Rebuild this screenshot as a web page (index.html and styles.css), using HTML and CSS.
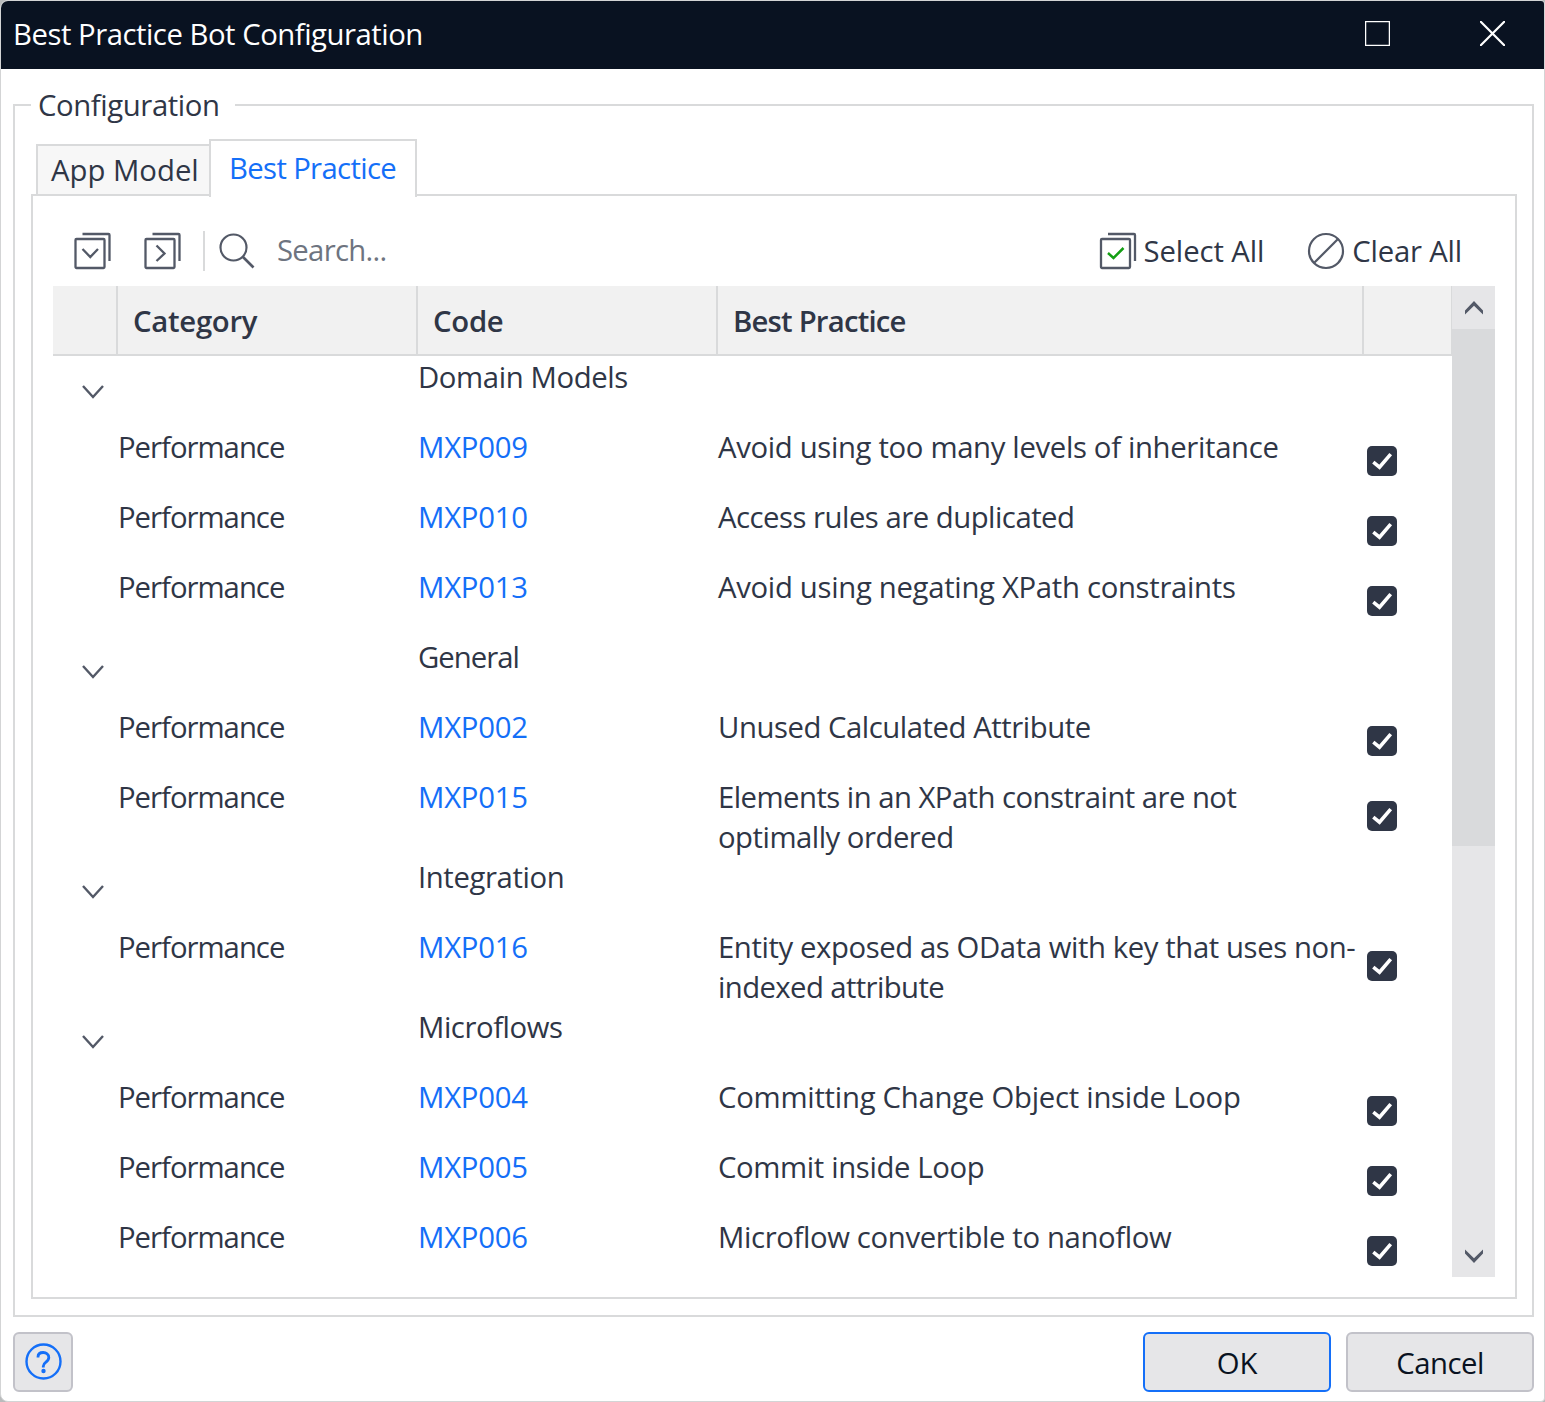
FILE: index.html
```html
<!DOCTYPE html>
<html lang="en">
<head>
<meta charset="utf-8">
<title>Best Practice Bot Configuration</title>
<link rel="stylesheet" href="styles.css">
</head>
<body>
<svg class="sprite" width="0" height="0">
  <symbol id="check" viewBox="0 0 30 30"><path d="M6.300 16.200l6.200 5L23.700 8.200" fill="none" stroke="#fff" stroke-width="3.600"/></symbol>
  <symbol id="chevron" viewBox="0 0 24 16"><path d="M2 2l10 11L22 2" fill="none" stroke="#535967" stroke-width="2.400"/></symbol>
</svg>
<div class="window">
  <header class="titlebar">
    <h1 class="title">Best Practice Bot Configuration</h1>
    <svg class="maximize" width="25" height="25" viewBox="0 0 25 25"><rect x=".6" y=".6" width="23.8" height="23.8" fill="none" stroke="#fff" stroke-width="1.3"/></svg>
    <svg class="close" width="25" height="25" viewBox="0 0 25 25"><path d="M0 0l25 25M25 0L0 25" stroke="#fff" stroke-width="2.2"/></svg>
  </header>

  <fieldset class="group">
    <legend class="legend">Configuration</legend>
    <div class="tabs">
      <div class="tab">App Model</div>
      <div class="tab tab-active">Best Practice</div>
    </div>
    <div class="panel">
      <div class="toolbar">
        <svg class="tool" width="38" height="38" viewBox="0 0 38 38" fill="none" stroke="#535967" stroke-width="2.3"><rect x="2.500" y="7" width="29" height="29" rx="1"/><path d="M9.500 2h26a1 1 0 0 1 1 1v26M9.500 17l7.800 8L25 17"/></svg>
        <svg class="tool" width="38" height="38" viewBox="0 0 38 38" fill="none" stroke="#535967" stroke-width="2.3"><rect x="2.500" y="7" width="29" height="29" rx="1"/><path d="M9.500 2h26a1 1 0 0 1 1 1v26M13.500 13.500l8 8L13.500 29"/></svg>
        <span class="divider"></span>
        <svg class="search-icon" width="36" height="36" viewBox="0 0 36 36" fill="none" stroke="#535967" stroke-width="2.2"><circle cx="14.500" cy="14.500" r="13"/><path d="M23.500 23.500L34.500 34.500" stroke-width="2.600"/></svg>
        <span class="search">Search...</span>
        <div class="action action-select">
          <svg width="38" height="38" viewBox="0 0 38 38" fill="none" stroke="#535967" stroke-width="2.3"><rect x="2" y="7" width="29" height="29" rx="1"/><path d="M9 2h26a1 1 0 0 1 1 1v26"/><path d="M9 21l5.500 5L24.500 16" stroke="#149f14" stroke-width="2.500"/></svg>
          <span class="label-select">Select All</span>
        </div>
        <div class="action">
          <svg width="38" height="38" viewBox="0 0 38 38" fill="none" stroke="#535967" stroke-width="2.2"><circle cx="19" cy="19" r="17"/><path d="M7 31L31 7"/></svg>
          <span class="label-clear">Clear All</span>
        </div>
      </div>

      <div class="grid">
        <div class="table">
          <div class="row head"><div></div><div class="h-cat">Category</div><div class="h-code">Code</div><div class="h-bp">Best Practice</div><div></div></div>
          <div class="row group-row"><svg class="chev"><use href="#chevron"/></svg><div></div><div class="g1">Domain Models</div></div>
          <div class="row"><i></i><div class="cat">Performance</div><a class="code">MXP009</a><div class="t1">Avoid using too many levels of inheritance</div><svg class="box"><use href="#check"/></svg></div>
          <div class="row"><i></i><div class="cat">Performance</div><a class="code">MXP010</a><div class="t2">Access rules are duplicated</div><svg class="box"><use href="#check"/></svg></div>
          <div class="row"><i></i><div class="cat">Performance</div><a class="code">MXP013</a><div class="t3">Avoid using negating XPath constraints</div><svg class="box"><use href="#check"/></svg></div>
          <div class="row group-row"><svg class="chev"><use href="#chevron"/></svg><div></div><div class="g2">General</div></div>
          <div class="row"><i></i><div class="cat">Performance</div><a class="code">MXP002</a><div class="t4">Unused Calculated Attribute</div><svg class="box"><use href="#check"/></svg></div>
          <div class="row"><i></i><div class="cat">Performance</div><a class="code">MXP015</a><div><span class="t5">Elements in an XPath constraint are not</span><br><span class="t6">optimally ordered</span></div><svg class="box"><use href="#check"/></svg></div>
          <div class="row group-row"><svg class="chev"><use href="#chevron"/></svg><div></div><div class="g3">Integration</div></div>
          <div class="row"><i></i><div class="cat">Performance</div><a class="code">MXP016</a><div><span class="t7">Entity exposed as OData with key that uses non-</span><br><span class="t8">indexed attribute</span></div><svg class="box"><use href="#check"/></svg></div>
          <div class="row group-row"><svg class="chev"><use href="#chevron"/></svg><div></div><div class="g4">Microflows</div></div>
          <div class="row"><i></i><div class="cat">Performance</div><a class="code">MXP004</a><div class="t9">Committing Change Object inside Loop</div><svg class="box"><use href="#check"/></svg></div>
          <div class="row"><i></i><div class="cat">Performance</div><a class="code">MXP005</a><div class="t10">Commit inside Loop</div><svg class="box"><use href="#check"/></svg></div>
          <div class="row"><i></i><div class="cat">Performance</div><a class="code">MXP006</a><div class="t11">Microflow convertible to nanoflow</div><svg class="box"><use href="#check"/></svg></div>
        </div>
        <div class="scrollbar">
          <div class="arrow"><svg width="18" height="14" viewBox="0 0 18 14"><path d="M0 9.500L9 0l9 9.500v4L9 4.700 0 13.500z" fill="#535967"/></svg></div>
          <div class="thumb"></div>
          <div class="arrow arrow-down"><svg width="18" height="14" viewBox="0 0 18 14"><path d="M0 0.500v4L9 14l9-9.500v-4L9 9.300z" fill="#535967"/></svg></div>
        </div>
      </div>
    </div>
  </fieldset>

  <footer class="footer">
    <button class="button help"><svg width="38" height="38" viewBox="0 0 38 38" fill="none" stroke="#146ff8" stroke-width="2.400"><circle cx="19.500" cy="18.500" r="17"/><path d="M14 14.500v-.6c0-2.800 2.200-4.400 5.200-4.400s5.600 1.700 5.600 4.900c0 2.500-1.300 3.500-2.900 4.700-1.800 1.300-2.600 2.100-2.600 4.200v1.200" stroke-width="2.800"/><circle cx="19.500" cy="28" r="2.200" fill="#146ff8" stroke="none"/></svg></button>
    <button class="button ok">OK</button>
    <button class="button cancel">Cancel</button>
  </footer>
</div>
</body>
</html>
```
FILE: styles.css
```css
* { box-sizing: border-box; }

body {
  margin: 0;
  width: 1545px;
  height: 1402px;
  overflow: hidden;
  background: #b9bbbc;
  color: #2f3646;
  font: 29.3px/40px "Open Sans", "Noto Sans", sans-serif;
}

.sprite { display: none; }

.window {
  display: flex;
  flex-direction: column;
  height: 1402px;
  border: 1px solid #d3d4d5;
  border-radius: 8px 4px 4px 8px;
  background: #fff;
  overflow: hidden;
  white-space: nowrap;
}

.titlebar {
  display: flex;
  align-items: center;
  height: 68px;
  padding: 0 39px 2px 12px;
  background: #091221;
  color: #fff;
}

.title { margin: 0 auto 0 0; font-size: inherit; font-weight: 400; letter-spacing: -.48px; }
.maximize { margin-right: 90px; }
.maximize, .close { margin-bottom: 1px; }

.group {
  flex: none;
  margin: 16px 10px 0 12px;
  padding: 0 15px 16px 16px;
  border: 2px solid #d9dadb;
  height: 1232px;
}

.legend { height: 40px; width: 204px; padding: 0 0 0 7px; letter-spacing: -.4px; }

.tabs {
  position: relative;
  display: flex;
  align-items: flex-end;
  height: 58px;
  margin: 14px 0 -3px 5px;
}

.tab {
  width: 173px;
  height: 50px;
  margin-bottom: 3px;
  padding: 4px 0 0 13px;
  border: 2px solid #d9dadb;
  border-width: 2px 0 0 2px;
  background: #f7f7f7;
}

.tab-active {
  width: 208px;
  height: 58px;
  margin: 0;
  padding: 7px 0 0 18px;
  border-width: 2px 2px 0;
  background: #fff;
  color: #146ff8;
  letter-spacing: -.65px;
}

.panel {
  height: 1105px;
  padding: 35px 20px 0;
  border: 2px solid #d9dadb;
}

.toolbar { display: flex; align-items: center; height: 40px; padding: 0 33px 0 20px; }
.tool { margin-right: 32px; }
.divider { width: 2px; height: 40px; margin: 0 14px 0 -10px; background: #d9dadb; }
.search-icon { margin-right: 22px; }
.search { margin: 0 auto 2px 0; color: #6e7480; letter-spacing: -.7px; }
.action { display: flex; align-items: center; gap: 7px; }
.action-select { margin-right: 43px; }
.label-select { letter-spacing: -.1px; }
.label-clear { letter-spacing: -.2px; }

.grid { display: flex; height: 991px; margin-top: 15px; }
.table { width: 1399px; }

.row {
  display: grid;
  grid-template-columns: 65px 300px 300px 649px 30px;
  min-height: 70px;
}
.row > a, .row > div { padding-top: 1px; height: max-content; }
.row > div:has(br) { height: 80px; }

.head {
  grid-template-columns: 65px 300px 300px 646px 88px;
  height: 70px;
  border-bottom: 2px solid #d9dadb;
  background: #f1f1f1;
  font-weight: 600;
}
.head > div { height: 68px; padding: 15px 0 0 15px; border-right: 2px solid #d9dadb; }
.head > div:last-child { border-right-width: 1px; }

.h-cat, .h-code { letter-spacing: -.28px; }
.h-bp { letter-spacing: -.8px; }
.g1, .g3 { letter-spacing: -.4px; }
.g2 { letter-spacing: -1px; }
.g4 { letter-spacing: -.45px; }
.cat { letter-spacing: -1px; }
.t1 { letter-spacing: -.34px; }
.t2 { letter-spacing: -.5px; }
.t3 { letter-spacing: -.31px; }
.t4 { letter-spacing: -.46px; }
.t5 { letter-spacing: -.54px; }
.t6 { letter-spacing: -.5px; }
.t7 { letter-spacing: -.41px; }
.t8 { letter-spacing: -.6px; }
.t9 { letter-spacing: -.26px; }
.t10 { letter-spacing: -.37px; }
.t11 { letter-spacing: -.37px; }

.code { color: #146ff8; letter-spacing: -.22px; }
.chev { width: 24px; height: 16px; align-self: center; margin: 2px 0 0 28px; }
.box { width: 30px; height: 30px; align-self: center; border-radius: 5px; background: #2f3646; }

.scrollbar { display: flex; flex-direction: column; width: 43px; background: #e6e6e8; }
.arrow { display: flex; align-items: center; justify-content: center; height: 43px; }
.arrow-down { margin-top: auto; }
.thumb { height: 517px; background: #d9dadc; }

.footer { display: flex; padding: 15px 10px 0 12px; }
.button {
  width: 188px;
  height: 60px;
  padding: 2px 0 0;
  border: 2px solid #c2c2c9;
  border-radius: 6px;
  background: #e6e6e8;
  color: #091221;
  font: inherit;
}
.help { display: flex; align-items: center; justify-content: center; width: 60px; margin-right: auto; padding: 0; }
.ok { margin-right: 15px; border-color: #146ff8; }
.cancel { letter-spacing: -.5px; }
```
